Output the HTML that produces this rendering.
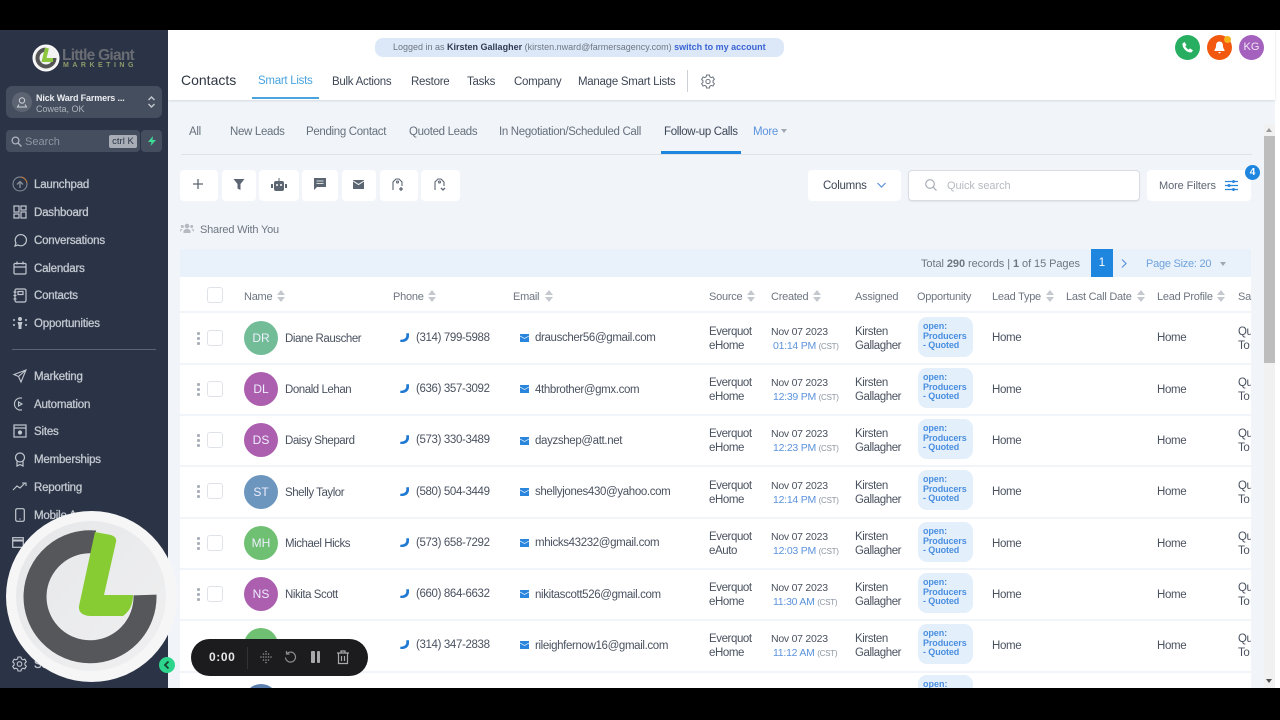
<!DOCTYPE html>
<html><head><meta charset="utf-8"><title>Contacts</title>
<style>
html,body{margin:0;padding:0;width:1280px;height:720px;overflow:hidden;background:#000}
*{box-sizing:border-box}
body{font-family:"Liberation Sans",sans-serif;font-size:12px;color:#4a5260;position:relative}
.a,.t{position:absolute}
.t{white-space:nowrap;line-height:14px;transform:translateY(-50%)}
svg{position:absolute;overflow:visible}
.nav{color:#c3c8d0;font-size:11.5px;left:34px;letter-spacing:-.2px;-webkit-text-stroke:.3px #c3c8d0;margin-top:1px}
.tab{color:#66707c;font-size:11.5px;top:132px;letter-spacing:-.33px}
.top{color:#3e4756;font-size:11.5px;top:82px;letter-spacing:-.27px}
.btn{position:absolute;top:170px;height:31px;background:#fff;border-radius:4px}
.hd{color:#6e7681;font-size:11px;top:297px;letter-spacing:-.25px}
.sort{position:absolute;top:290px;width:8px;height:12px}
.sort:before{content:"";position:absolute;left:0;top:0;border:4px solid transparent;border-top:0;border-bottom:5px solid #c4c9cf}
.sort:after{content:"";position:absolute;left:0;top:7px;border:4px solid transparent;border-bottom:0;border-top:5px solid #c4c9cf}
.sep{position:absolute;left:180px;width:1071px;height:2px;background:#f1f4f8}
.dots{position:absolute;left:197px;width:3px;height:13px;background:radial-gradient(circle at 1.5px 1.5px,#a9b0b9 1.5px,transparent 1.6px) 0 0/3px 5px}
.cb{position:absolute;left:207px;width:16px;height:16px;border:1px solid #dfe3e8;border-radius:3px;background:#fff}
.av{position:absolute;left:244px;width:34px;height:34px;border-radius:50%;color:#eef;font-size:12px;text-align:center;line-height:34px}
.c{font-size:11.5px;color:#4a5260;letter-spacing:-.36px;margin-top:1px}
.b2{white-space:normal;line-height:14px;color:#4a5260;font-size:11.5px;letter-spacing:-.42px;margin-top:1px}
.op{position:absolute;left:918px;width:55px;height:40px;background:#e3effb;border-radius:9px;color:#4a8fe0;font-size:9px;line-height:9.5px;padding:5px 0 0 5px;font-weight:bold;letter-spacing:-.1px}
.dt{position:absolute;left:771px;line-height:14px;font-size:10.5px;letter-spacing:-.25px;white-space:nowrap}
.tm{color:#5c93dc;font-size:10.5px;margin-left:2px}
.tm small{color:#8a94a0;font-size:8px}
</style></head><body>

<div class="a" style="left:0;top:30px;width:1280px;height:658px;background:#f1f5fa"></div>
<div class="a" style="left:1275px;top:30px;width:5px;height:658px;background:#fff"></div>
<div class="a" style="left:168px;top:30px;width:1107px;height:70px;background:#fff;box-shadow:0 1px 2px #d5d9df"></div>
<div class="a" style="left:0;top:30px;width:168px;height:658px;background:#2b3446"></div>

<!-- logo -->
<svg style="left:32px;top:44px" width="30" height="30" viewBox="0 0 30 30"><circle cx="14" cy="14" r="13" fill="#f3f3f3" stroke="#fff"/><path d="M14 5.500A8.500 8.500 0 1 0 22.500 14" fill="none" stroke="#555" stroke-width="4"/><path d="M15 4l-3 12h9" fill="none" stroke="#8cc63f" stroke-width="4"/></svg>
<div class="t" style="left:62px;top:56px;font-size:15.500px;font-weight:bold;color:#696c72;letter-spacing:-.75px">Little Giant</div>
<div class="t" style="left:63px;top:66px;font-size:7px;font-weight:bold;color:#8f9a6a;letter-spacing:3.500px">MARKETING</div>

<div class="a" style="left:6px;top:86px;width:156px;height:32px;background:#454e5f;border-radius:6px"></div>
<div class="a" style="left:12px;top:92px;width:20px;height:20px;background:#5c6472;border-radius:50%"></div>
<svg style="left:16px;top:96px" width="12" height="12" viewBox="0 0 12 12" fill="none" stroke="#cfd3d9"><circle cx="6" cy="4.500" r="2.700"/><path d="M3 8.500L1.500 11h9L9 8.500"/></svg>
<div class="t" style="left:36px;top:98px;font-size:9px;font-weight:bold;color:#eceef1;letter-spacing:-.15px">Nick Ward Farmers ...</div>
<div class="t" style="left:36px;top:109px;font-size:9px;color:#aeb4bd">Coweta, OK</div>
<svg style="left:147px;top:95px" width="9" height="14" viewBox="0 0 9 14" fill="none" stroke="#c3c8d0" stroke-width="1.400"><path d="M1.500 5L4.500 2L7.500 5M1.500 9L4.500 12L7.500 9"/></svg>

<div class="a" style="left:6px;top:130px;width:134px;height:22px;background:#454e5f;border-radius:4px"></div>
<div class="a" style="left:141px;top:130px;width:21px;height:22px;background:#454e5f;border-radius:4px"></div>
<svg style="left:11px;top:136px" width="11" height="11" viewBox="0 0 11 11" fill="none" stroke="#aeb4bd" stroke-width="1.300"><circle cx="4.500" cy="4.500" r="3.400"/><path d="M7 7l3.500 3.500"/></svg>
<div class="t" style="left:25px;top:142px;font-size:11px;color:#8f96a2">Search</div>
<div class="a" style="left:109px;top:135px;width:28px;height:13px;background:#a9aeb6;border-radius:2px;color:#2b3446;font-size:9.500px;line-height:13px;text-align:center">ctrl K</div>
<svg style="left:146px;top:135px" width="12" height="12" viewBox="0 0 12 12"><path d="M7 1L2 7h3.500L4.500 11L10 5H6.500z" fill="#3ddc97"/></svg>

<!-- nav icons -->
<svg style="left:12px;top:176px" width="16" height="16" viewBox="0 0 16 16" fill="none" stroke="#8a909b"><circle cx="8" cy="8" r="7"/><path d="M8 12V6M5 8.500L8 5.500L11 8.500" stroke-width="1.300"/><path d="M9 1a7 7 0 0 1 6 6" stroke="#c47a3a"/></svg>
<svg style="left:13px;top:205px" width="14" height="14" viewBox="0 0 14 14" fill="none" stroke="#c3c8d0" stroke-width="1.200"><rect x="1" y="1" width="5" height="6"/><rect x="8" y="1" width="5" height="4"/><rect x="1" y="9" width="5" height="4"/><rect x="8" y="7" width="5" height="6"/></svg>
<svg style="left:13px;top:233px" width="14" height="14" viewBox="0 0 14 14" fill="none" stroke="#c3c8d0" stroke-width="1.200"><path d="M2 13l1-3a5.600 5.600 0 1 1 2 2z"/></svg>
<svg style="left:13px;top:261px" width="14" height="14" viewBox="0 0 14 14" fill="none" stroke="#c3c8d0" stroke-width="1.200"><rect x="1" y="2.500" width="12" height="10.500" rx="1"/><path d="M1 6h12M4 .5v3M10 .5v3"/></svg>
<svg style="left:13px;top:288px" width="14" height="15" viewBox="0 0 14 15" fill="none" stroke="#c3c8d0" stroke-width="1.200"><rect x="2" y="1" width="11" height="13" rx="1.500"/><rect x="5" y="3.500" width="5" height="3"/><path d="M.5 4h3M.5 7.500h3M.5 11h3"/></svg>
<svg style="left:12px;top:316px" width="16" height="14" viewBox="0 0 16 14" fill="#c3c8d0"><circle cx="8" cy="3" r="2"/><path d="M5.500 6h5l-1 3.500V13h-3V9.500z"/><circle cx="2" cy="4" r="1"/><circle cx="14" cy="4" r="1"/><circle cx="2" cy="9" r="1"/><circle cx="14" cy="9" r="1"/></svg>

<div class="t nav" style="top:184px">Launchpad</div>
<div class="t nav" style="top:212px">Dashboard</div>
<div class="t nav" style="top:240px">Conversations</div>
<div class="t nav" style="top:268px">Calendars</div>
<div class="t nav" style="top:295px">Contacts</div>
<div class="t nav" style="top:323px">Opportunities</div>
<div class="a" style="left:12px;top:349px;width:144px;height:1px;background:#5c6472"></div>

<svg style="left:13px;top:369px" width="14" height="14" viewBox="0 0 14 14" fill="none" stroke="#c3c8d0" stroke-width="1.100"><path d="M13 1L1 5.500l4.500 2L8 13zM13 1L5.500 7.500"/></svg>
<svg style="left:13px;top:397px" width="14" height="14" viewBox="0 0 14 14" fill="none" stroke="#c3c8d0" stroke-width="1.100"><path d="M9 1.200A6 6 0 1 0 9 12.800"/><path d="M5.500 5v4L9 7z"/></svg>
<svg style="left:13px;top:424px" width="14" height="14" viewBox="0 0 14 14" fill="none" stroke="#c3c8d0" stroke-width="1.200"><rect x="1" y="1" width="12" height="12"/><path d="M1 4h12"/><circle cx="7" cy="8.500" r="1.500" fill="#c3c8d0"/></svg>
<svg style="left:14px;top:452px" width="12" height="15" viewBox="0 0 12 15" fill="none" stroke="#c3c8d0" stroke-width="1.200"><circle cx="6" cy="5.500" r="4.500"/><path d="M3 9.500V14l3-1.500L9 14V9.500"/></svg>
<svg style="left:13px;top:482px" width="14" height="9" viewBox="0 0 14 9" fill="none" stroke="#c3c8d0" stroke-width="1.100"><path d="M0 8l4-4 3 2 5-5M9 1h4v3"/></svg>
<svg style="left:15px;top:508px" width="10" height="14" viewBox="0 0 10 14" fill="none" stroke="#c3c8d0" stroke-width="1.200"><rect x=".7" y=".7" width="8.600" height="12.600" rx="1.500"/><path d="M4.500 11h1"/></svg>
<svg style="left:12px;top:537px" width="12" height="11" viewBox="0 0 12 11" fill="none" stroke="#c3c8d0" stroke-width="1.200"><rect x=".7" y=".7" width="10.600" height="9.600"/><path d="M1 3.500h10" stroke-width="2"/></svg>
<div class="t nav" style="top:376px">Marketing</div>
<div class="t nav" style="top:404px">Automation</div>
<div class="t nav" style="top:431px">Sites</div>
<div class="t nav" style="top:459px">Memberships</div>
<div class="t nav" style="top:487px">Reporting</div>
<div class="t nav" style="top:515px">Mobile App</div>
<div class="t nav" style="top:664px">Settings</div>
<svg style="left:12px;top:656px" width="15" height="16" viewBox="0 0 15 16" fill="none" stroke="#c3c8d0" stroke-width="1.100"><circle cx="7.500" cy="8" r="2.300"/><path d="M6 1h3l.4 1.900 1.600.9 1.800-.6 1.500 2.600-1.400 1.300v1.800l1.400 1.300-1.500 2.600-1.800-.6-1.600.9-.4 1.900H6l-.4-1.900-1.600-.9-1.800.6L.7 10.300 2.100 9V7.200L.7 5.900 2.200 3.200l1.800.6 1.600-.9z"/></svg>

<!-- top bar -->
<div class="a" style="left:375px;top:38px;width:409px;height:19px;background:#dce8f8;border-radius:8px"></div>
<div class="t" style="left:393px;top:47px;font-size:9px;color:#6e7681">Logged in as <b style="color:#2f3b52">Kirsten Gallagher</b> (kirsten.nward@farmersagency.com) <b style="color:#3b63d3">switch to my account</b></div>
<div class="a" style="left:1175px;top:35px;width:25px;height:25px;border-radius:50%;background:#27ae60"></div>
<svg style="left:1181px;top:41px" width="13" height="13" viewBox="0 0 13 13"><path d="M1.500 2.500L3.500 1l2 3-1.200 1.300c.6 1.300 2 2.700 3.300 3.300L9 7.400l3 2-1.500 2C6 12 1 7 1.500 2.500z" fill="#fff"/></svg>
<div class="a" style="left:1207px;top:35px;width:25px;height:25px;border-radius:50%;background:#f2590f"></div>
<svg style="left:1213px;top:41px" width="13" height="13" viewBox="0 0 13 13"><path d="M6.500 .5c2.500 0 3.500 2 3.500 4.500 0 2 1.500 4 1.500 4v1h-10V9S3 7 3 5C3 2.500 4 .5 6.500 .5zM5 11h3l-1.500 1.500z" fill="#fff"/></svg>
<div class="a" style="left:1224px;top:36px;width:7px;height:7px;border-radius:50%;background:#f5b21b"></div>
<div class="a" style="left:1239px;top:35px;width:25px;height:25px;border-radius:50%;background:#a461bd;color:#f1e6f5;font-size:11px;line-height:25px;text-align:center">KG</div>

<div class="t" style="left:181px;top:80px;font-size:14px;color:#2f3742">Contacts</div>
<div class="t top" style="left:258px;top:81px;color:#4aa3dd">Smart Lists</div>
<div class="a" style="left:252px;top:97px;width:67px;height:1.500px;background:#4aa3dd"></div>
<div class="t top" style="left:332px">Bulk Actions</div>
<div class="t top" style="left:411px">Restore</div>
<div class="t top" style="left:467px">Tasks</div>
<div class="t top" style="left:514px">Company</div>
<div class="t top" style="left:578px">Manage Smart Lists</div>
<div class="a" style="left:687px;top:70px;width:1px;height:22px;background:#ccd0d6"></div>
<svg style="left:701px;top:74px" width="14" height="15" viewBox="0 0 15 16" fill="none" stroke="#6e7681" stroke-width="1.100"><circle cx="7.500" cy="8" r="2.300"/><path d="M6 1h3l.4 1.900 1.600.9 1.800-.6 1.500 2.600-1.400 1.300v1.800l1.400 1.300-1.500 2.600-1.800-.6-1.600.9-.4 1.900H6l-.4-1.900-1.600-.9-1.800.6L.7 10.300 2.100 9V7.200L.7 5.900 2.200 3.200l1.800.6 1.600-.9z"/></svg>

<!-- tabs -->
<div class="t tab" style="left:189px">All</div>
<div class="t tab" style="left:230px">New Leads</div>
<div class="t tab" style="left:306px">Pending Contact</div>
<div class="t tab" style="left:409px">Quoted Leads</div>
<div class="t tab" style="left:499px">In Negotiation/Scheduled Call</div>
<div class="t tab" style="left:664px;color:#3e4756">Follow-up Calls</div>
<div class="t tab" style="left:753px;color:#5c93dc">More</div>
<div class="a" style="left:781px;top:129px;border:3.500px solid transparent;border-top:4px solid #a0a8b2;border-bottom:0"></div>
<div class="a" style="left:181px;top:154px;width:1071px;height:1px;background:#dfe3e8"></div>
<div class="a" style="left:661px;top:151px;width:80px;height:3px;background:#1f86e0"></div>

<!-- toolbar -->
<div class="btn" style="left:180px;width:38px"></div>
<div class="btn" style="left:222px;width:34px"></div>
<div class="btn" style="left:259px;width:40px"></div>
<div class="btn" style="left:302px;width:36px"></div>
<div class="btn" style="left:342px;width:34px"></div>
<div class="btn" style="left:380px;width:38px"></div>
<div class="btn" style="left:421px;width:39px"></div>
<svg style="left:192px;top:178px" width="12" height="12" viewBox="0 0 12 12" stroke="#5c6672" stroke-width="1.300"><path d="M6 1v10M1 6h10"/></svg>
<svg style="left:233px;top:179px" width="12" height="11" viewBox="0 0 12 11" fill="#5c6672"><path d="M.5 0h11L7.500 5v6l-3-1.500V5z"/></svg>
<svg style="left:271px;top:178px" width="16" height="13" viewBox="0 0 16 13" fill="#5c6672"><rect x="3" y="3" width="10" height="10" rx="2"/><rect y="6" width="2" height="4"/><rect x="14" y="6" width="2" height="4"/><rect x="7.500" width="1" height="3"/><circle cx="6" cy="7" r="1" fill="#fff"/><circle cx="10" cy="7" r="1" fill="#fff"/></svg>
<svg style="left:314px;top:178px" width="12" height="12" viewBox="0 0 12 12" fill="#5c6672"><path d="M0 0h12v9H3l-3 3z"/><path d="M2.500 3h7M2.500 5.500h7" stroke="#fff" stroke-width=".8"/></svg>
<svg style="left:353px;top:180px" width="11" height="9" viewBox="0 0 11 9" fill="#5c6672"><path d="M0 0h11v9H0z"/><path d="M0 1l5.500 3.500L11 1" stroke="#fff" fill="none"/></svg>
<svg style="left:392px;top:178px" width="12" height="14" viewBox="0 0 12 14" fill="none" stroke="#5c6672" stroke-width="1.100"><path d="M1 12V4l3-3h3l3 3v4"/><circle cx="5.500" cy="4" r="1"/><path d="M9 9v4M7 11h4" stroke-width="1.300"/></svg>
<svg style="left:434px;top:178px" width="12" height="14" viewBox="0 0 12 14" fill="none" stroke="#5c6672" stroke-width="1.100"><path d="M1 12V4l3-3h3l3 3v4"/><circle cx="5.500" cy="4" r="1"/><path d="M7 10l2 2 2-2" stroke-width="1.300"/></svg>

<div class="btn" style="left:808px;width:93px"></div>
<div class="t" style="left:823px;top:186px;font-size:11.500px;color:#3e4756;letter-spacing:-.25px">Columns</div>
<svg style="left:877px;top:182px" width="9" height="6" viewBox="0 0 9 6" fill="none" stroke="#5c8fd6" stroke-width="1.200"><path d="M.5 1L4.500 5L8.500 1"/></svg>
<div class="a" style="left:908px;top:170px;width:232px;height:31px;background:#fff;border:1px solid #d9dde3;border-radius:4px;box-shadow:0 1px 1px #e2e5ea"></div>
<svg style="left:925px;top:179px" width="12" height="12" viewBox="0 0 12 12" fill="none" stroke="#a0a6ae" stroke-width="1.100"><circle cx="5" cy="5" r="4.300"/><path d="M8 8l3.500 3.500"/></svg>
<div class="t" style="left:947px;top:186px;font-size:11px;color:#b5bac1;letter-spacing:-.05px">Quick search</div>
<div class="btn" style="left:1147px;width:104px"></div>
<div class="t" style="left:1159px;top:186px;font-size:11px;color:#5e6672;letter-spacing:-.1px">More Filters</div>
<svg style="left:1225px;top:180px" width="13" height="11" viewBox="0 0 13 11" stroke="#2a86dc" stroke-width="1.300" fill="#2a86dc"><path d="M0 1.500h13M0 5.500h13M0 9.500h13"/><circle cx="8.500" cy="1.500" r=".8"/><circle cx="4" cy="5.500" r=".8"/><circle cx="8.500" cy="9.500" r=".8"/></svg>
<div class="a" style="left:1245px;top:165px;width:15px;height:15px;border-radius:50%;background:#1f86e0;color:#fff;font-size:10px;font-weight:bold;line-height:15px;text-align:center">4</div>

<svg style="left:180px;top:223px" width="14" height="11" viewBox="0 0 14 11" fill="#b5bac1"><circle cx="7" cy="3" r="2.300"/><circle cx="2.300" cy="3.500" r="1.500"/><circle cx="11.700" cy="3.500" r="1.500"/><path d="M3.500 10V7.500Q7 4 10.500 7.500V10zM0 9V7q1-1.500 2.500-1zM14 9V7q-1-1.500-2.500-1z"/></svg>
<div class="t" style="left:200px;top:230px;font-size:11px;color:#6e7681;letter-spacing:-.2px">Shared With You</div>

<!-- pagination -->
<div class="a" style="left:180px;top:249px;width:1071px;height:28px;background:#e9f1fb"></div>
<div class="t" style="left:921px;top:264px;font-size:11px;color:#6e7681;letter-spacing:-.07px">Total <b>290</b> records | <b>1</b> of 15 Pages</div>
<div class="a" style="left:1091px;top:249px;width:22px;height:28px;background:#1f86e0;color:#fff;font-size:11.500px;line-height:28px;text-align:center">1</div>
<svg style="left:1121px;top:259px" width="6" height="9" viewBox="0 0 6 9" fill="none" stroke="#5c93dc" stroke-width="1.200"><path d="M1 .5L5 4.500L1 8.500"/></svg>
<div class="t" style="left:1146px;top:264px;font-size:11px;color:#6fa3dc;letter-spacing:-.25px">Page Size: 20</div>
<div class="a" style="left:1220px;top:262px;border:3.500px solid transparent;border-top:4px solid #a0a8b2;border-bottom:0"></div>

<!-- table -->
<div class="a" style="left:180px;top:277px;width:1071px;height:411px;background:#fff"></div>
<div class="a" style="left:207px;top:287px;width:16px;height:16px;border:1px solid #dfe3e8;border-radius:3px"></div>
<div class="t hd" style="left:244px">Name</div><div class="sort" style="left:277px"></div>
<div class="t hd" style="left:393px">Phone</div><div class="sort" style="left:428px"></div>
<div class="t hd" style="left:513px">Email</div><div class="sort" style="left:545px"></div>
<div class="t hd" style="left:709px">Source</div><div class="sort" style="left:747px"></div>
<div class="t hd" style="left:771px">Created</div><div class="sort" style="left:813px"></div>
<div class="t hd" style="left:855px">Assigned</div>
<div class="t hd" style="left:917px">Opportunity</div>
<div class="t hd" style="left:992px">Lead Type</div><div class="sort" style="left:1046px"></div>
<div class="t hd" style="left:1066px">Last Call Date</div><div class="sort" style="left:1137px"></div>
<div class="t hd" style="left:1157px">Lead Profile</div><div class="sort" style="left:1217px"></div>
<div class="t hd" style="left:1238px">Sa</div>

<div class="sep" style="top:311px"></div><div class="sep" style="top:363px"></div><div class="sep" style="top:414px"></div><div class="sep" style="top:465px"></div><div class="sep" style="top:517px"></div><div class="sep" style="top:568px"></div><div class="sep" style="top:619px"></div><div class="sep" style="top:671px"></div>

<!-- row 1 -->
<div class="dots" style="top:332px"></div><div class="cb" style="top:330px"></div>
<div class="av" style="top:321px;background:#72bd98">DR</div>
<div class="t c" style="left:285px;top:338px;letter-spacing:-.45px">Diane Rauscher</div>
<svg style="left:400px;top:333px" width="9" height="9" viewBox="0 0 9 9"><path d="M6.300 .3H9V3C9 6.500 6 9 2.500 9H.3V6.700l2.300-.2C4.800 6 6 4.800 6.300 3z" fill="#1f78d1"/></svg>
<div class="t c" style="left:416px;top:337px">(314) 799-5988</div>
<svg style="left:520px;top:334px" width="9" height="8" viewBox="0 0 9 8"><rect width="9" height="8" fill="#2a86dc"/><path d="M0 2l4.500 2.500L9 2" stroke="#fff" stroke-width=".7" fill="none"/></svg>
<div class="t c" style="left:535px;top:337px">drauscher56@gmail.com</div>
<div class="a b2" style="left:709px;top:324px">Everquot<br>eHome</div>
<div class="dt" style="top:325px">Nov 07 2023<br><span class="tm">01:14 PM <small>(CST)</small></span></div>
<div class="a b2" style="left:855px;top:324px">Kirsten<br>Gallagher</div>
<div class="op" style="top:317px">open:<br>Producers<br>- Quoted</div>
<div class="t c" style="left:992px;top:337px">Home</div>
<div class="t c" style="left:1157px;top:337px">Home</div>
<div class="a b2" style="left:1238px;top:324px;width:13px;overflow:hidden">Qu<br>To</div>

<!-- row 2 -->
<div class="dots" style="top:383px"></div><div class="cb" style="top:381px"></div>
<div class="av" style="top:372px;background:#ab5fae">DL</div>
<div class="t c" style="left:285px;top:389px;letter-spacing:-.45px">Donald Lehan</div>
<svg style="left:400px;top:384px" width="9" height="9" viewBox="0 0 9 9"><path d="M6.300 .3H9V3C9 6.500 6 9 2.500 9H.3V6.700l2.300-.2C4.800 6 6 4.800 6.300 3z" fill="#1f78d1"/></svg>
<div class="t c" style="left:416px;top:388px">(636) 357-3092</div>
<svg style="left:520px;top:385px" width="9" height="8" viewBox="0 0 9 8"><rect width="9" height="8" fill="#2a86dc"/><path d="M0 2l4.500 2.500L9 2" stroke="#fff" stroke-width=".7" fill="none"/></svg>
<div class="t c" style="left:535px;top:389px">4thbrother@gmx.com</div>
<div class="a b2" style="left:709px;top:375px">Everquot<br>eHome</div>
<div class="dt" style="top:376px">Nov 07 2023<br><span class="tm">12:39 PM <small>(CST)</small></span></div>
<div class="a b2" style="left:855px;top:375px">Kirsten<br>Gallagher</div>
<div class="op" style="top:368px">open:<br>Producers<br>- Quoted</div>
<div class="t c" style="left:992px;top:389px">Home</div>
<div class="t c" style="left:1157px;top:389px">Home</div>
<div class="a b2" style="left:1238px;top:375px;width:13px;overflow:hidden">Qu<br>To</div>

<!-- row 3 -->
<div class="dots" style="top:434px"></div><div class="cb" style="top:432px"></div>
<div class="av" style="top:423px;background:#ab5fae">DS</div>
<div class="t c" style="left:285px;top:440px;letter-spacing:-.45px">Daisy Shepard</div>
<svg style="left:400px;top:435px" width="9" height="9" viewBox="0 0 9 9"><path d="M6.300 .3H9V3C9 6.500 6 9 2.500 9H.3V6.700l2.300-.2C4.800 6 6 4.800 6.300 3z" fill="#1f78d1"/></svg>
<div class="t c" style="left:416px;top:439px">(573) 330-3489</div>
<svg style="left:520px;top:437px" width="9" height="8" viewBox="0 0 9 8"><rect width="9" height="8" fill="#2a86dc"/><path d="M0 2l4.500 2.500L9 2" stroke="#fff" stroke-width=".7" fill="none"/></svg>
<div class="t c" style="left:535px;top:440px">dayzshep@att.net</div>
<div class="a b2" style="left:709px;top:426px">Everquot<br>eHome</div>
<div class="dt" style="top:427px">Nov 07 2023<br><span class="tm">12:23 PM <small>(CST)</small></span></div>
<div class="a b2" style="left:855px;top:426px">Kirsten<br>Gallagher</div>
<div class="op" style="top:419px">open:<br>Producers<br>- Quoted</div>
<div class="t c" style="left:992px;top:440px">Home</div>
<div class="t c" style="left:1157px;top:440px">Home</div>
<div class="a b2" style="left:1238px;top:426px;width:13px;overflow:hidden">Qu<br>To</div>

<!-- row 4 -->
<div class="dots" style="top:485px"></div><div class="cb" style="top:483px"></div>
<div class="av" style="top:475px;background:#6c96bd">ST</div>
<div class="t c" style="left:285px;top:492px;letter-spacing:-.45px">Shelly Taylor</div>
<svg style="left:400px;top:487px" width="9" height="9" viewBox="0 0 9 9"><path d="M6.300 .3H9V3C9 6.500 6 9 2.500 9H.3V6.700l2.300-.2C4.800 6 6 4.800 6.300 3z" fill="#1f78d1"/></svg>
<div class="t c" style="left:416px;top:491px">(580) 504-3449</div>
<svg style="left:520px;top:488px" width="9" height="8" viewBox="0 0 9 8"><rect width="9" height="8" fill="#2a86dc"/><path d="M0 2l4.500 2.500L9 2" stroke="#fff" stroke-width=".7" fill="none"/></svg>
<div class="t c" style="left:535px;top:491px">shellyjones430@yahoo.com</div>
<div class="a b2" style="left:709px;top:478px">Everquot<br>eHome</div>
<div class="dt" style="top:479px">Nov 07 2023<br><span class="tm">12:14 PM <small>(CST)</small></span></div>
<div class="a b2" style="left:855px;top:478px">Kirsten<br>Gallagher</div>
<div class="op" style="top:470px">open:<br>Producers<br>- Quoted</div>
<div class="t c" style="left:992px;top:491px">Home</div>
<div class="t c" style="left:1157px;top:491px">Home</div>
<div class="a b2" style="left:1238px;top:478px;width:13px;overflow:hidden">Qu<br>To</div>

<!-- row 5 -->
<div class="dots" style="top:537px"></div><div class="cb" style="top:535px"></div>
<div class="av" style="top:526px;background:#6fc072">MH</div>
<div class="t c" style="left:285px;top:543px;letter-spacing:-.45px">Michael Hicks</div>
<svg style="left:400px;top:538px" width="9" height="9" viewBox="0 0 9 9"><path d="M6.300 .3H9V3C9 6.500 6 9 2.500 9H.3V6.700l2.300-.2C4.800 6 6 4.800 6.300 3z" fill="#1f78d1"/></svg>
<div class="t c" style="left:416px;top:542px">(573) 658-7292</div>
<svg style="left:520px;top:539px" width="9" height="8" viewBox="0 0 9 8"><rect width="9" height="8" fill="#2a86dc"/><path d="M0 2l4.500 2.500L9 2" stroke="#fff" stroke-width=".7" fill="none"/></svg>
<div class="t c" style="left:535px;top:542px">mhicks43232@gmail.com</div>
<div class="a b2" style="left:709px;top:529px">Everquot<br>eAuto</div>
<div class="dt" style="top:530px">Nov 07 2023<br><span class="tm">12:03 PM <small>(CST)</small></span></div>
<div class="a b2" style="left:855px;top:529px">Kirsten<br>Gallagher</div>
<div class="op" style="top:522px">open:<br>Producers<br>- Quoted</div>
<div class="t c" style="left:992px;top:543px">Home</div>
<div class="t c" style="left:1157px;top:543px">Home</div>
<div class="a b2" style="left:1238px;top:529px;width:13px;overflow:hidden">Qu<br>To</div>

<!-- row 6 -->
<div class="dots" style="top:588px"></div><div class="cb" style="top:586px"></div>
<div class="av" style="top:577px;background:#ab5fae">NS</div>
<div class="t c" style="left:285px;top:594px;letter-spacing:-.45px">Nikita Scott</div>
<svg style="left:400px;top:589px" width="9" height="9" viewBox="0 0 9 9"><path d="M6.300 .3H9V3C9 6.500 6 9 2.500 9H.3V6.700l2.300-.2C4.800 6 6 4.800 6.300 3z" fill="#1f78d1"/></svg>
<div class="t c" style="left:416px;top:593px">(660) 864-6632</div>
<svg style="left:520px;top:590px" width="9" height="8" viewBox="0 0 9 8"><rect width="9" height="8" fill="#2a86dc"/><path d="M0 2l4.500 2.500L9 2" stroke="#fff" stroke-width=".7" fill="none"/></svg>
<div class="t c" style="left:535px;top:594px">nikitascott526@gmail.com</div>
<div class="a b2" style="left:709px;top:580px">Everquot<br>eHome</div>
<div class="dt" style="top:581px">Nov 07 2023<br><span class="tm">11:30 AM <small>(CST)</small></span></div>
<div class="a b2" style="left:855px;top:580px">Kirsten<br>Gallagher</div>
<div class="op" style="top:573px">open:<br>Producers<br>- Quoted</div>
<div class="t c" style="left:992px;top:594px">Home</div>
<div class="t c" style="left:1157px;top:594px">Home</div>
<div class="a b2" style="left:1238px;top:580px;width:13px;overflow:hidden">Qu<br>To</div>

<!-- row 7 -->
<div class="av" style="top:628px;background:#6fc072"></div>
<svg style="left:400px;top:640px" width="9" height="9" viewBox="0 0 9 9"><path d="M6.300 .3H9V3C9 6.500 6 9 2.500 9H.3V6.700l2.300-.2C4.800 6 6 4.800 6.300 3z" fill="#1f78d1"/></svg>
<div class="t c" style="left:416px;top:644px">(314) 347-2838</div>
<svg style="left:520px;top:641px" width="9" height="8" viewBox="0 0 9 8"><rect width="9" height="8" fill="#2a86dc"/><path d="M0 2l4.500 2.500L9 2" stroke="#fff" stroke-width=".7" fill="none"/></svg>
<div class="t c" style="left:535px;top:645px">rileighfernow16@gmail.com</div>
<div class="a b2" style="left:709px;top:631px">Everquot<br>eHome</div>
<div class="dt" style="top:632px">Nov 07 2023<br><span class="tm">11:12 AM <small>(CST)</small></span></div>
<div class="a b2" style="left:855px;top:631px">Kirsten<br>Gallagher</div>
<div class="op" style="top:624px">open:<br>Producers<br>- Quoted</div>
<div class="t c" style="left:992px;top:645px">Home</div>
<div class="t c" style="left:1157px;top:645px">Home</div>
<div class="a b2" style="left:1238px;top:631px;width:13px;overflow:hidden">Qu<br>To</div>

<!-- row 8 partial -->
<div class="a" style="left:180px;top:672px;width:1071px;height:16px;overflow:hidden">
<div class="a" style="left:64px;top:12px;width:34px;height:34px;border-radius:50%;background:#5c7fb0"></div>
<div class="a" style="left:738px;top:3px;width:55px;height:40px;background:#e3effb;border-radius:9px;color:#4a8fe0;font-size:9px;font-weight:bold;padding:5px 0 0 5px;line-height:9.500px">open:</div>
</div>

<!-- scrollbar -->
<div class="a" style="left:1264px;top:124px;width:11px;height:564px;background:#f1f1f1"></div>
<div class="a" style="left:1264px;top:136px;width:11px;height:227px;background:#bdbdbd"></div>
<div class="a" style="left:1266px;top:128px;border:3.500px solid transparent;border-bottom:4px solid #9a9a9a;border-top:0"></div>
<div class="a" style="left:1266px;top:679px;border:3.500px solid transparent;border-top:4px solid #505050;border-bottom:0"></div>

<!-- camera bubble -->
<div class="a" style="left:6px;top:511px;width:171px;height:171px;border-radius:50%;background:#f6f6f7"></div>
<div class="a" style="left:16px;top:521px;width:150px;height:150px;border-radius:50%;background:linear-gradient(135deg,#e6e7e9,#f0f0f1)"></div>
<svg style="left:6px;top:511px" width="171" height="171" viewBox="0 0 171 171">
<path d="M89 31A55 55 0 1 0 139 84" fill="none" stroke="#56575b" stroke-width="23"/>
<path d="M89 21L105 24Q111 26 110 31L98 84H127Q127 98 117 105H84Q72 104 73 95z" fill="#88cc33"/>
</svg>
<svg style="left:159px;top:657px" width="16" height="16" viewBox="0 0 16 16"><circle cx="8" cy="8" r="8" fill="#2dd48c"/><path d="M9.500 4.500L6 8l3.500 3.500" fill="none" stroke="#14432f" stroke-width="1.800"/></svg>

<!-- recorder -->
<div class="a" style="left:191px;top:639px;width:177px;height:37px;border-radius:18.500px;background:#1c1c1e"></div>
<div class="t" style="left:209px;top:657px;font-size:12px;font-weight:bold;color:#e8e8e8;letter-spacing:.6px">0:00</div>
<div class="a" style="left:247px;top:647px;width:1px;height:22px;background:#333"></div>
<svg style="left:259px;top:650px" width="14" height="14" viewBox="0 0 14 14" fill="#8e8e90"><circle cx="7" cy="1.500" r=".8"/><circle cx="4.500" cy="4" r=".8"/><circle cx="7" cy="4" r=".8"/><circle cx="9.500" cy="4" r=".8"/><circle cx="2" cy="7" r=".8"/><circle cx="4.500" cy="7" r=".8"/><circle cx="7" cy="7" r=".8"/><circle cx="9.500" cy="7" r=".8"/><circle cx="12" cy="7" r=".8"/><circle cx="4.500" cy="10" r=".8"/><circle cx="7" cy="10" r=".8"/><circle cx="9.500" cy="10" r=".8"/><circle cx="7" cy="12.500" r=".8"/></svg>
<svg style="left:284px;top:650px" width="13" height="14" viewBox="0 0 13 14" fill="none" stroke="#8e8e90" stroke-width="1.200"><path d="M3 3.500a5 5 0 1 1-1.500 4M2.500 1v3h3"/></svg>
<div class="a" style="left:311px;top:651px;width:3.500px;height:12px;background:#a9a9ab;border-radius:1px"></div>
<div class="a" style="left:316.500px;top:651px;width:3.500px;height:12px;background:#a9a9ab;border-radius:1px"></div>
<svg style="left:336px;top:650px" width="14" height="14" viewBox="0 0 14 14" fill="none" stroke="#a9a9ab" stroke-width="1.200"><path d="M1 3h12M5 3V1h4v2M2.500 3v10.500h9V3M5.500 6v5M8.500 6v5"/></svg>

<div class="a" style="left:0;top:0;width:1280px;height:30px;background:#000"></div>
<div class="a" style="left:0;top:688px;width:1280px;height:32px;background:#000"></div>
</body></html>
